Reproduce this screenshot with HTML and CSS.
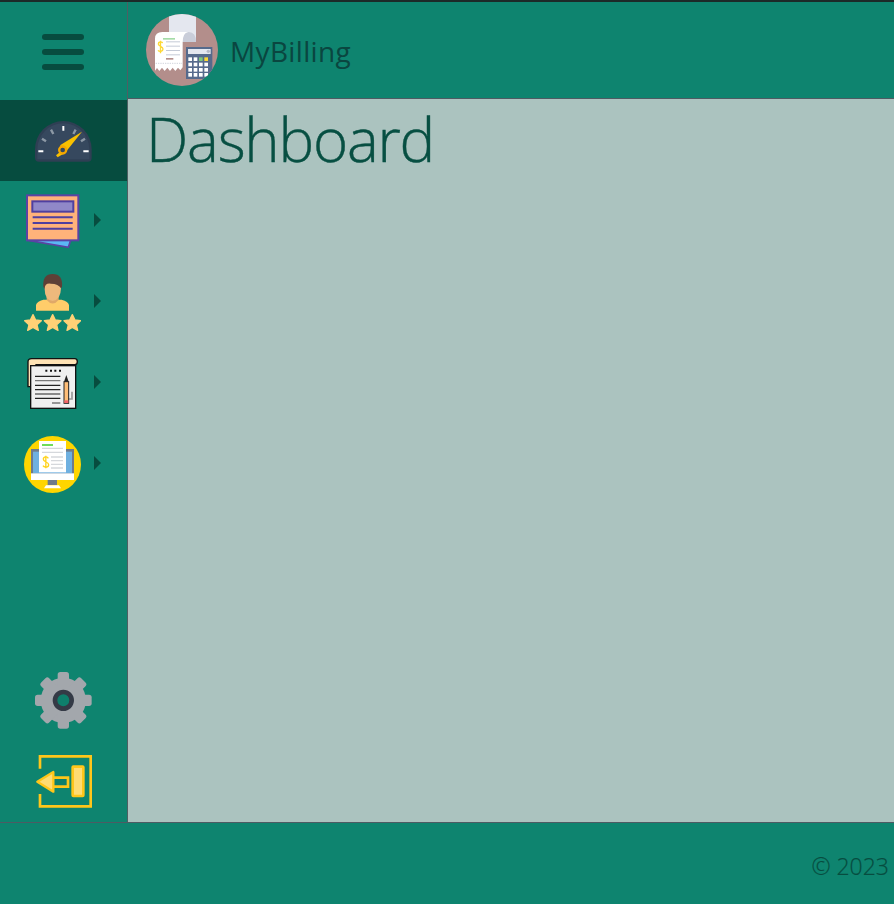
FILE: index.html
```html
<!DOCTYPE html>
<html lang="en">
<head>
<meta charset="utf-8">
<title>MyBilling</title>
<link rel="stylesheet" href="styles.css">
</head>
<body>
<div class="app">
  <header class="topbar">
    <button class="menu-toggle" aria-label="Menu">
      <span class="bar"></span><span class="bar"></span><span class="bar"></span>
    </button>
    <div class="brand">
      <svg class="logo" viewBox="438 42 216 216">
        <defs><clipPath id="logoclip"><circle cx="546" cy="150" r="108"/></clipPath></defs>
        <circle cx="546" cy="150" r="108" fill="#b38e8b"/>
        <g clip-path="url(#logoclip)">
          <rect x="507" y="42" width="81" height="84" fill="#e4e7ef"/>
          <path d="M546 126 Q546 96 566 96 Q588 96 588 126 Z" fill="#c9cdd9"/>
          <path d="M465 116 Q465 96 487 96 H564 Q548 100 548 126 V202 L541 211 L534 203 L526 213 L518 203 L510 213 L502 203 L494 213 L486 203 L478 213 L471 204 L465 212 Z" fill="#fff"/>
          <rect x="489" y="114" width="36" height="5" fill="#a5dca8"/>
          <path d="M488 129 C484 124 475 125 475 132 C475 140 489 138 489 147 C489 155 478 156 474 151 M481.500 122 V160" fill="none" stroke="#fdd835" stroke-width="4"/>
          <path d="M498 125.500 H540 M498 138.500 H540 M498 151.500 H540 M498 164.500 H540" stroke="#c4cad6" stroke-width="3"/>
          <rect x="498" y="174" width="22" height="5" fill="#b38e8b"/>
          <path d="M467 190 H546" stroke="#b9bfcc" stroke-width="2" stroke-dasharray="4 3"/>
          <rect x="558" y="141" width="79" height="96" fill="#566a8c"/>
          <rect x="564" y="147" width="68" height="15" fill="#e4e7ef"/>
          <circle cx="625" cy="154" r="5" fill="#b5bac6"/>
          <g fill="#fff">
            <rect x="565" y="172" width="11" height="11"/><rect x="581" y="172" width="11" height="11"/>
            <rect x="597" y="172" width="11" height="11" fill="#7ec77f"/><rect x="613" y="172" width="11" height="11" fill="#fdd835"/>
            <rect x="565" y="188" width="11" height="11"/><rect x="581" y="188" width="11" height="11"/>
            <rect x="597" y="188" width="11" height="11"/><rect x="613" y="188" width="11" height="11"/>
            <rect x="565" y="204" width="11" height="11"/><rect x="581" y="204" width="11" height="11"/>
            <rect x="597" y="204" width="11" height="11"/><rect x="613" y="204" width="11" height="11"/>
            <rect x="565" y="219" width="11" height="11"/><rect x="581" y="219" width="11" height="11"/>
            <rect x="597" y="219" width="11" height="11"/><rect x="613" y="219" width="11" height="11"/>
          </g>
        </g>
      </svg>
      <span class="brand-name">MyBilling</span>
    </div>
  </header>

  <div class="middle">
    <nav class="sidebar">
      <div class="nav-group">
        <a class="nav-item plain active">
          <svg class="icon" viewBox="105 336 171 171">
            <path d="M105 448 A85 85 0 0 1 275 448 V473 Q275 485 263 485 H117 Q105 485 105 473 Z" fill="#2f3f54"/>
            <path d="M112 448 A78 78 0 0 1 268 448 V478 H112 Z" fill="#36485e"/>
            <path d="M115 453.500 H130 M250 453.500 H266 M190 378 V392" stroke="#fff" stroke-width="6"/>
            <path d="M126 416 L138 424 M153 389 L160 402 M227 389 L220 402 M255 416 L243 424" stroke="#8d99a6" stroke-width="7"/>
            <path d="M246 395 L199 454 L180 436 Z" fill="#f9c000"/>
            <path d="M180 456 L168 466 L173 472 L188 463 Z" fill="#f9c000"/>
            <circle cx="188" cy="450" r="10.500" fill="#36485e" stroke="#f5a800" stroke-width="7"/>
          </svg>
        </a>
        <a class="nav-item">
          <svg class="icon" viewBox="72 24 171 171">
            <path d="M85 166 L205 187 L214 160 Z" fill="#5bb8f5" stroke="#5b43a4" stroke-width="5"/>
            <rect x="81" y="31" width="154" height="135" fill="#ffb27a" stroke="#5b43a4" stroke-width="6"/>
            <rect x="97" y="49" width="123" height="31" fill="#9088c8" stroke="#4f3fa0" stroke-width="6"/>
            <path d="M98 97 H218 M98 114 H218 M98 131 H218" stroke="#4f3fa0" stroke-width="6"/>
          </svg>
          <span class="caret"></span>
        </a>
        <a class="nav-item">
          <svg class="icon" viewBox="72 267 171 171">
            <path d="M108 377 V360 Q110 349 130 344 L185 344 Q205 349 207 360 V377 Z" fill="#ffcd6a"/>
            <path d="M140 336 H176 V345 Q158 366 140 345 Z" fill="#e0a868"/>
            <path d="M130 305 Q127 267 158 267 Q189 267 186 305 L180 315 H136 Z" fill="#5d4037"/>
            <path d="M134 312 Q134 294 152 296 Q176 296 183 310 Q182 345 158 348 Q134 345 134 312 Z" fill="#edb97c"/>
            <g fill="#ffd176" stroke="#ffd176" stroke-width="4" stroke-linejoin="round">
              <polygon points="99,389 107,405 124,407 111,419 115,436 99,427 83,436 87,419 74,407 91,405"/>
              <polygon points="158,389 166,405 183,407 170,419 174,436 158,427 142,436 146,419 133,407 150,405"/>
              <polygon points="217,389 225,405 242,407 229,419 233,436 217,427 201,436 205,419 192,407 209,405"/>
            </g>
          </svg>
          <span class="caret"></span>
        </a>
        <a class="nav-item">
          <svg class="icon" viewBox="72 30 171 171">
            <path d="M84 125 V50 Q84 41 95 41 H224 Q232 41 232 50 Q232 59 224 59 H108 V125 Z" fill="#ffe3b5" stroke="#111" stroke-width="4"/>
            <rect x="92" y="62" width="135" height="128" fill="#f0f0f0" stroke="#111" stroke-width="4"/>
            <path d="M136 77 H142 M150 77 H156 M163 77 H169 M177 77 H183" stroke="#111" stroke-width="6"/>
            <path d="M105 94 H181 M105 121 H181 M105 134 H181 M105 147 H181 M105 160 H181" stroke="#222" stroke-width="3.500"/>
            <path d="M105 107 H181 M156 174 H181" stroke="#777" stroke-width="4"/>
            <path d="M216 140 V162 H205" fill="none" stroke="#999" stroke-width="5"/>
            <rect x="192" y="110" width="14" height="65" fill="#ffbe78" stroke="#222" stroke-width="3"/>
            <rect x="193" y="166" width="12" height="8" fill="#f0636a"/>
            <path d="M199 90 L192 110 H206 Z" fill="#222"/>
          </svg>
          <span class="caret"></span>
        </a>
        <a class="nav-item">
          <svg class="icon" viewBox="72 273 171 171">
            <circle cx="157.500" cy="358.500" r="85.500" fill="#ffd500"/>
            <rect x="93" y="312" width="129" height="75" fill="#6f7a8a"/>
            <rect x="99" y="320" width="117" height="65" fill="#6fb0e0"/>
            <rect x="93" y="385" width="129" height="20" fill="#fff"/>
            <rect x="143" y="405" width="28" height="15" fill="#6f7a8a"/>
            <path d="M138 421 H177 L183 430 H132 Z" fill="#fff"/>
            <rect x="117" y="288" width="81" height="94" fill="#fff"/>
            <rect x="126" y="297" width="33" height="6" fill="#6fdc5a"/>
            <path d="M126 310 H189 M126 322 H189 M153 336 H189 M153 347 H189 M153 358 H189 M153 369 H189" stroke="#d5d8dc" stroke-width="4"/>
            <path d="M145 340 C142 334 130 334 130 343 C130 352 146 350 146 359 C146 368 132 368 129 362 M137.500 332 V370" fill="none" stroke="#ffd21a" stroke-width="4"/>
          </svg>
          <span class="caret"></span>
        </a>
      </div>
      <div class="nav-group">
        <a class="nav-item plain">
          <svg class="icon" viewBox="105 36 171 171">
            <g fill="#a3a7ac">
              <circle cx="190" cy="121" r="68"/>
              <rect x="173" y="36" width="34" height="170" rx="8"/>
              <rect x="173" y="36" width="34" height="170" rx="8" transform="rotate(45 190 121)"/>
              <rect x="173" y="36" width="34" height="170" rx="8" transform="rotate(90 190 121)"/>
              <rect x="173" y="36" width="34" height="170" rx="8" transform="rotate(135 190 121)"/>
            </g>
            <circle cx="190" cy="121" r="25" fill="#0e7f6c" stroke="#343a46" stroke-width="14"/>
          </svg>
        </a>
        <a class="nav-item plain">
          <svg class="icon" viewBox="105 279 171 171">
            <path d="M120 326 V289 H272 V439 H120 V402" fill="none" stroke="#ffc61a" stroke-width="8"/>
            <rect x="218" y="320" width="32" height="88" rx="2" fill="#ffdc73" stroke="#ffc61a" stroke-width="8"/>
            <path d="M160 353 H204 V380 H160" fill="#0e7f6c" stroke="#ffc61a" stroke-width="8"/>
            <path d="M112 365 L160 336 V395 Z" fill="#ffdc73" stroke="#ffc61a" stroke-width="7" stroke-linejoin="round"/>
          </svg>
        </a>
      </div>
    </nav>
    <main class="content">
      <h1 class="title">Dashboard</h1>
    </main>
  </div>

  <footer class="footer">
    <span class="copy">© 2023</span>
  </footer>
</div>
</body>
</html>
```
FILE: styles.css
```css
* { box-sizing: border-box; }
html, body { margin: 0; height: 100%; }
body { font-family: "Open Sans", "Noto Sans", sans-serif; background: #0e846f; color: #074c3f; overflow: hidden; }
.app { display: flex; flex-direction: column; height: 904px; border-top: 2px solid #1c2a28; }
.topbar { display: flex; height: 97px; background: #0e846f; flex: none; }
.menu-toggle { width: 128px; flex: none; border: 0; border-right: 1px solid #4d5f63; background: transparent; padding: 2px 0 0 42px; display: flex; flex-direction: column; align-items: flex-start; gap: 9px; justify-content: center; }
.bar { display: block; width: 42px; height: 6px; border-radius: 3px; background: #074c3f; }
.brand { flex: 1; display: flex; align-items: center; padding: 0 0 1px 18px; gap: 12px; border-bottom: 1px solid #4d5b63; }
.logo { width: 72px; height: 72px; display: block; }
.brand-name { font-size: 28px; letter-spacing: .35px; color: #0a4640; line-height: 1; margin-top: 2px; }
.middle { flex: 1; display: flex; min-height: 0; }
.sidebar { width: 128px; flex: none; display: flex; flex-direction: column; justify-content: space-between; background: #0e846f; border-right: 1px solid #4d5f63; padding-top: 1px; }
.nav-group { display: flex; flex-direction: column; }
.nav-item { display: flex; align-items: center; height: 81px; padding-left: 24px; gap: 13px; }
.nav-item.plain { padding-left: 35px; }
.nav-item.active { background: #064c3f; }
.icon { width: 57px; height: 57px; display: block; flex: none; }
.caret { width: 0; height: 0; border-style: solid; border-width: 7px 0 7px 7px; border-color: transparent transparent transparent #074c3f; margin-top: -3px; }
.content { flex: 1; background: #abc3bf; padding: 0 0 0 18px; }
.title { margin: 0; font-size: 60px; font-weight: 300; -webkit-text-stroke: .4px #074f42; letter-spacing: -1.25px; color: #074f42; line-height: 80px; }
.footer { height: 82px; flex: none; background: #0e846f; border-top: 1px solid #4d5b63; display: flex; align-items: center; justify-content: flex-end; padding: 4px 5px 0 0; }
.copy { font-size: 23px; font-weight: 300; -webkit-text-stroke: .2px #074c3f; color: #074c3f; }
```
